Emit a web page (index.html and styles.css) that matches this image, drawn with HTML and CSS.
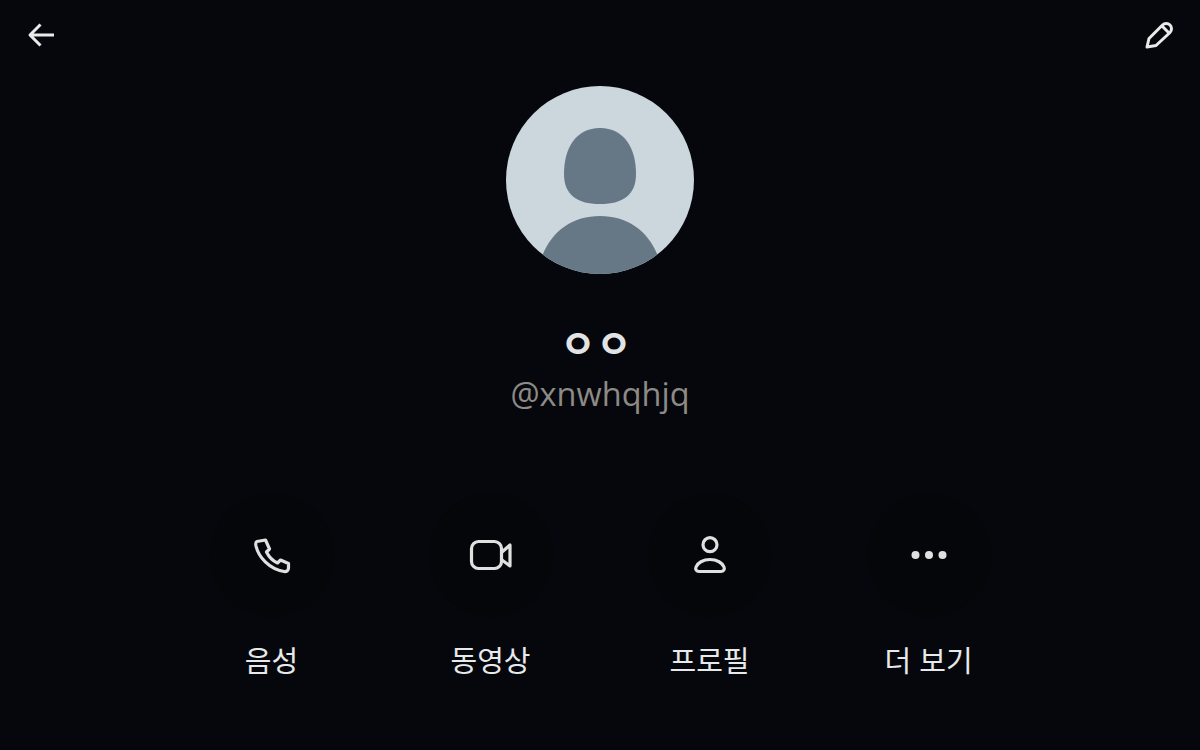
FILE: index.html
```html
<!DOCTYPE html>
<html lang="ko">
  <head>
    <meta charset="UTF-8" />
    <meta name="viewport" content="width=device-width, initial-scale=1.0" />
    <title>프로필</title>
    <link rel="stylesheet" href="styles.css">
  </head>
  <body>
    <header class="topbar">
      <svg class="top-icon" viewBox="0 0 30 30" aria-label="뒤로">
        <path d="M3 15H27M13.500 4.500L3 15L13.500 25.500" />
      </svg>
      <svg class="top-icon" viewBox="0 0 30 30" aria-label="수정">
        <path d="M3 27L5 18.500L18.500 5C20.500 3 24 3 26 5C28 7 28 10.500 26 12.500L12 25.500Z" />
        <path d="M18 6L25 13" />
      </svg>
    </header>

    <main class="profile">
      <svg class="avatar" viewBox="0 0 188 188">
        <clipPath id="avatarClip"><circle cx="94" cy="94" r="94" /></clipPath>
        <g clip-path="url(#avatarClip)">
          <rect width="188" height="188" fill="#ccd6dd" />
          <path fill="#667786" d="M94 42C118 42 130 62 130 88C130 108 118 118 94 118C70 118 58 108 58 88C58 62 70 42 94 42Z" />
          <path fill="#667786" d="M31 188C38 150 62 130 94 130C126 130 150 150 157 188Z" />
        </g>
      </svg>
      <h1 class="name">ㅇㅇ</h1>
      <p class="handle">@xnwhqhjq</p>

      <div class="actions">
        <div class="action">
          <div class="action-circle">
            <svg class="action-icon" viewBox="0 0 44 44">
              <path d="M7 8.500L15.500 7L19.500 16L16.500 19C19 24 23 28 27.500 30L30.500 27L38.500 30.500V35C38.500 37.500 36.500 39 34 38.500C19 36 8.500 24 6 13C5.500 10.500 5.500 9 7 8.500Z" />
            </svg>
          </div>
          <span class="action-label">음성</span>
        </div>
        <div class="action">
          <div class="action-circle">
            <svg class="action-icon" viewBox="0 0 44 44">
              <rect x="2.500" y="8.500" width="30" height="27" rx="7" />
              <path d="M33 19L41 12V33L33 27" />
            </svg>
          </div>
          <span class="action-label">동영상</span>
        </div>
        <div class="action">
          <div class="action-circle">
            <svg class="action-icon" viewBox="0 0 44 44">
              <circle cx="22" cy="11.700" r="7" />
              <path d="M22 26.500C29 26.500 34.500 30 36 34C37 36.500 35.500 38.500 33 38.500H11C8.500 38.500 7 36.500 8 34C9.500 30 15 26.500 22 26.500Z" />
            </svg>
          </div>
          <span class="action-label">프로필</span>
        </div>
        <div class="action">
          <div class="action-circle">
            <svg class="action-icon dots" viewBox="0 0 44 44">
              <circle cx="8.500" cy="22" r="4" />
              <circle cx="22" cy="22" r="4" />
              <circle cx="35.500" cy="22" r="4" />
            </svg>
          </div>
          <span class="action-label">더 보기</span>
        </div>
      </div>
    </main>
  </body>
</html>
```

FILE: styles.css
```css
* {
  margin: 0;
  padding: 0;
  box-sizing: border-box;
}
body {
  height: 750px;
  overflow: hidden;
  background-color: #05070c;
  color: #e7e9ea;
  font-family: "Open Sans", "Noto Sans CJK KR", sans-serif;
}
.topbar {
  display: flex;
  justify-content: space-between;
  padding: 20px 26px 0 27px;
}
.top-icon {
  width: 30px;
  height: 30px;
  fill: none;
  stroke: #e9ebeb;
  stroke-width: 3;
  stroke-linejoin: round;
}
.profile {
  display: flex;
  flex-direction: column;
  align-items: center;
  padding-top: 36px;
}
.avatar {
  display: block;
  width: 188px;
  height: 188px;
}
.name {
  margin-top: 42px;
  padding-right: 8px;
  font-family: "Noto Sans CJK KR", sans-serif;
  font-size: 39px;
  line-height: 50px;
  font-weight: 700;
  color: #e2e3e3;
}
.handle {
  margin-top: 8px;
  font-size: 32.500px;
  line-height: 40px;
  color: #8e8a86;
}
.actions {
  display: flex;
  gap: 95px;
  margin-top: 79px;
}
.action {
  display: flex;
  flex-direction: column;
  align-items: center;
  width: 124px;
}
.action-circle {
  display: flex;
  justify-content: center;
  align-items: center;
  width: 124px;
  height: 124px;
  border-radius: 50%;
  background-color: #050609;
}
.action-icon {
  width: 44px;
  height: 44px;
  fill: none;
  stroke: #dfe0e0;
  stroke-width: 3.200;
  stroke-linejoin: round;
}
.dots {
  fill: #dfe0e0;
  stroke: none;
}
.action-label {
  margin-top: 22px;
  font-family: "Noto Sans CJK KR", sans-serif;
  font-size: 29px;
  line-height: 40px;
  white-space: nowrap;
}
```
